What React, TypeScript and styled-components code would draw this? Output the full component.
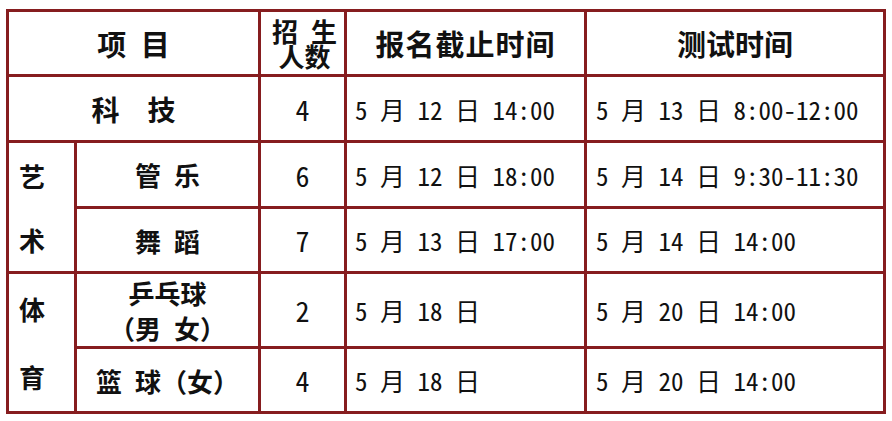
import styled, { createGlobalStyle } from 'styled-components'

const GlobalStyle = createGlobalStyle`
  html, body {
    margin: 0;
    padding: 0;
    background: #ffffff;
  }
  body {
    font-family: "Noto Sans CJK SC", "Noto Sans", sans-serif;
    color: #111111;
  }
`

const border = '#861d1f'

const Page = styled.div`
  padding: 9px 0 0 6px;
`

const Grid = styled.div`
  display: grid;
  grid-template-columns: 65px 181px 83px 237px 296px;
  grid-template-rows: 62px 63px 63px 62px 72px 62px;
  gap: 3px;
  padding: 3px;
  width: max-content;
  background: ${border};
`

interface CellProps {
  $col?: string;
  $row?: string;
  $align?: 'center' | 'left';
}

const Cell = styled.div<CellProps>`
  background: #ffffff;
  display: flex;
  align-items: center;
  justify-content: ${(p) => (p.$align === 'left' ? 'flex-start' : 'center')};
  grid-column: ${(p) => p.$col || 'auto'};
  grid-row: ${(p) => p.$row || 'auto'};
`

// half-width latin and spaces, like the SimHei of the original sheet
const HeadText = styled.span<{ $size?: number; $spacing?: number }>`
  font-size: ${(p) => p.$size || 29}px;
  font-weight: 700;
  letter-spacing: ${(p) => p.$spacing || 0}px;
  white-space: pre;
  font-feature-settings: "hwid" 1;
`

const StackedHead = styled.span`
  font-size: 26px;
  font-weight: 700;
  line-height: 25px;
  white-space: pre;
  text-align: center;
  margin-left: 4px;
  font-feature-settings: "hwid" 1;
`

const Group = styled(Cell)`
  flex-direction: column;
  justify-content: space-around;
  align-items: flex-start;
  padding-left: 10px;
  font-size: 26px;
  font-weight: 700;
`

const Item = styled.span`
  font-size: 26px;
  font-weight: 700;
  white-space: pre;
  word-spacing: 0.28em;
  text-align: center;
  line-height: 35px;
`

const Count = styled.span`
  font-size: 28px;
  font-weight: 400;
  font-feature-settings: "hwid" 1;
`

const Time = styled.span<{ $pad: number }>`
  font-size: 25px;
  font-weight: 400;
  white-space: pre;
  padding-left: ${(p) => p.$pad}px;
  font-feature-settings: "hwid" 1;
`

interface Row {
  name: string;
  count: string;
  deadline: string;
  test: string;
}

const art: Row[] = [
  { name: '管 乐', count: '6', deadline: '5 月 12 日 18:00', test: '5 月 14 日 9:30-11:30' },
  { name: '舞 蹈', count: '7', deadline: '5 月 13 日 17:00', test: '5 月 14 日 14:00' },
]

const sport: Row[] = [
  { name: '乒乓球\n（男 女）', count: '2', deadline: '5 月 18 日', test: '5 月 20 日 14:00' },
  { name: '篮 球（女）', count: '4', deadline: '5 月 18 日', test: '5 月 20 日 14:00' },
]

const Rows = ({ rows }: { rows: Row[] }) => (
  <>
    {rows.map((r) => [
      <Cell key={r.name + '-name'}>
        <Item>{r.name}</Item>
      </Cell>,
      <Cell key={r.name + '-count'}>
        <Count>{r.count}</Count>
      </Cell>,
      <Cell key={r.name + '-deadline'} $align="left">
        <Time $pad={8}>{r.deadline}</Time>
      </Cell>,
      <Cell key={r.name + '-test'} $align="left">
        <Time $pad={9}>{r.test}</Time>
      </Cell>,
    ])}
  </>
)

export default function App() {
  return (
    <Page>
      <GlobalStyle />
      <Grid>
        <Cell $col="1 / 3">
          <HeadText>项 目</HeadText>
        </Cell>
        <Cell>
          <StackedHead>{'招 生\n人数'}</StackedHead>
        </Cell>
        <Cell>
          <HeadText $spacing={1}>报名截止时间</HeadText>
        </Cell>
        <Cell>
          <HeadText>测试时间</HeadText>
        </Cell>

        <Cell $col="1 / 3">
          <HeadText $size={28}>科  技</HeadText>
        </Cell>
        <Cell>
          <Count>4</Count>
        </Cell>
        <Cell $align="left">
          <Time $pad={8}>5 月 12 日 14:00</Time>
        </Cell>
        <Cell $align="left">
          <Time $pad={9}>5 月 13 日 8:00-12:00</Time>
        </Cell>

        <Group $row="3 / 5">
          <span>艺</span>
          <span>术</span>
        </Group>
        <Rows rows={art} />

        <Group $row="5 / 7">
          <span>体</span>
          <span>育</span>
        </Group>
        <Rows rows={sport} />
      </Grid>
    </Page>
  )
}
